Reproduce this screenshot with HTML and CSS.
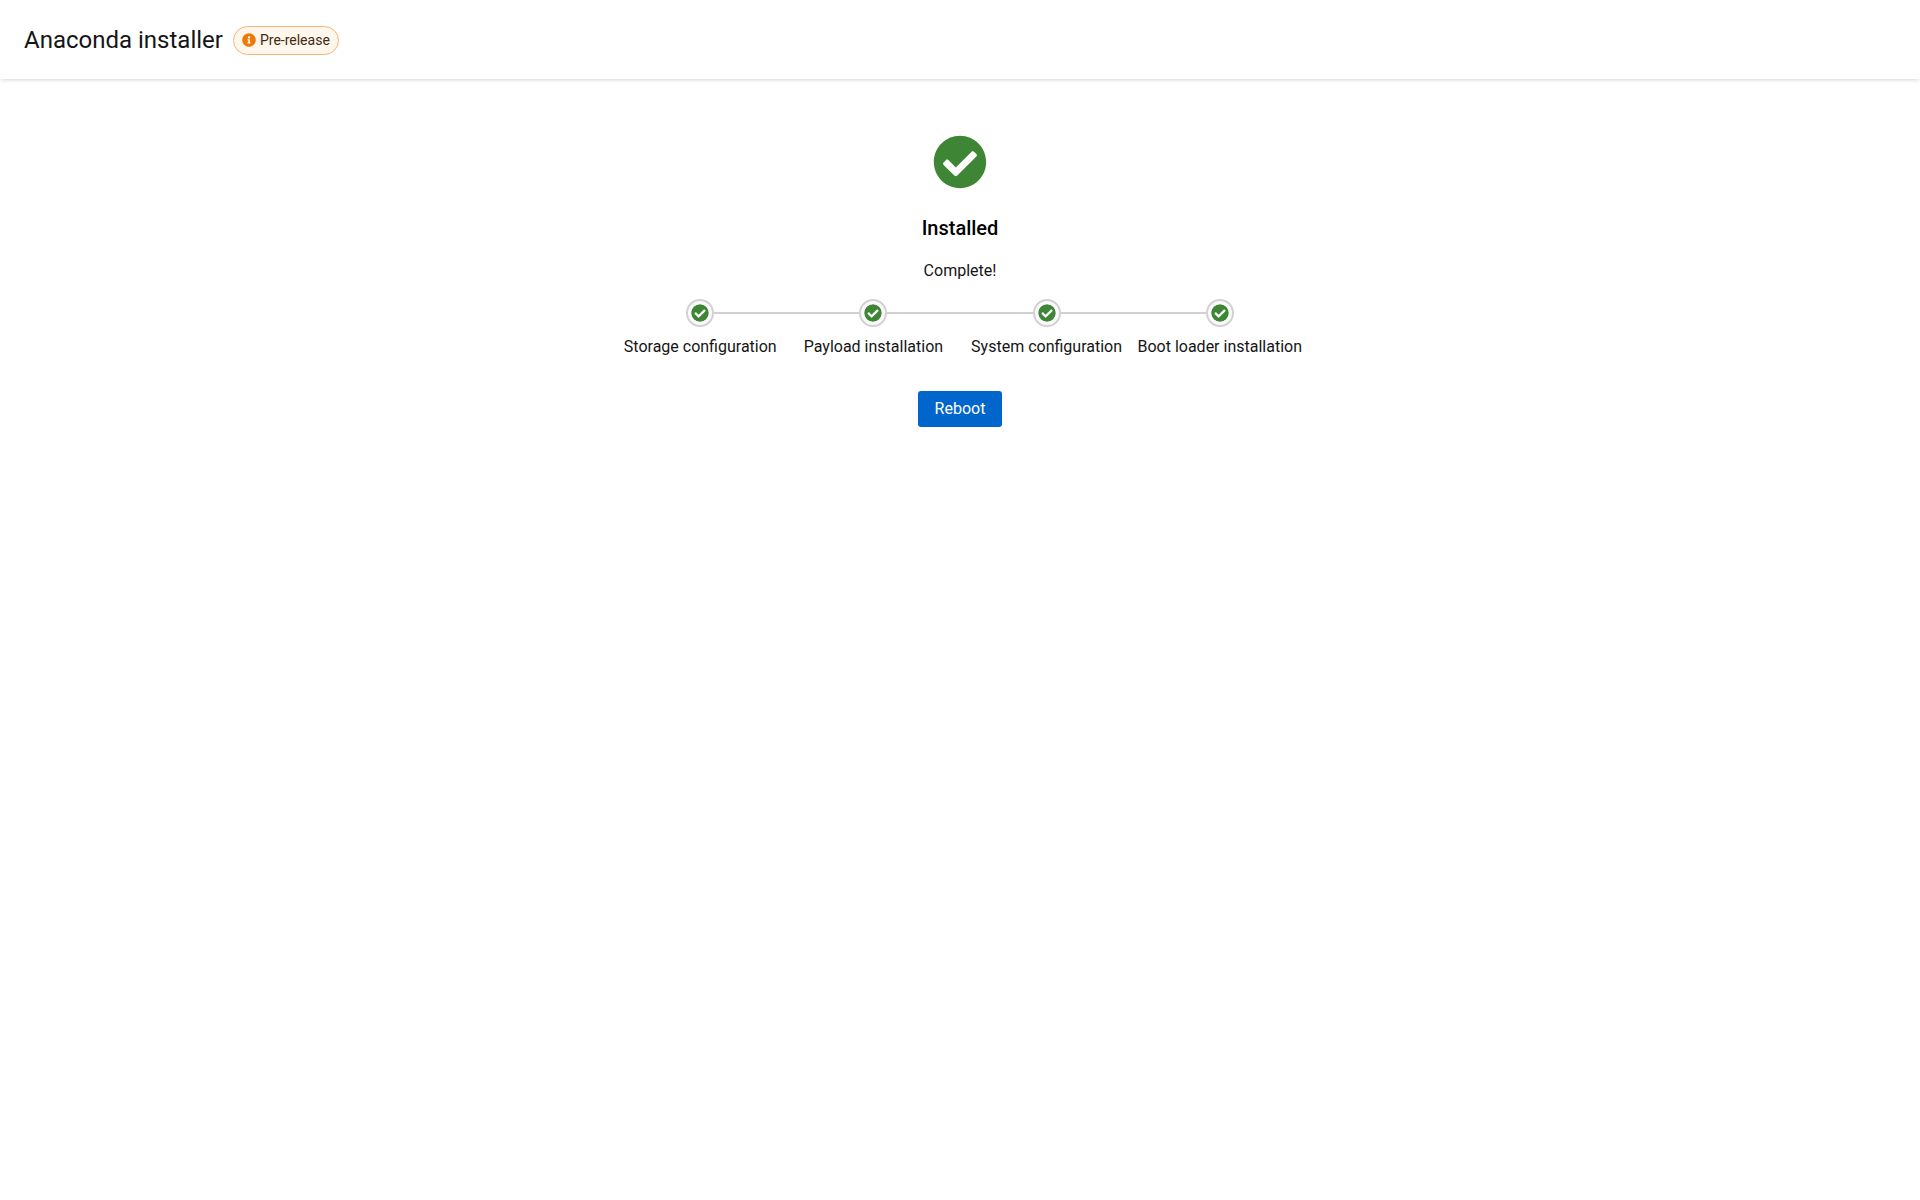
FILE: index.html
```html
<!DOCTYPE html>
<html lang="en">
<head>
  <meta charset="utf-8">
  <meta name="viewport" content="width=device-width, initial-scale=1">
  <title>Anaconda installer</title>
  <link rel="stylesheet" href="styles.css">
</head>
<body>
  <svg class="symbols" aria-hidden="true">
    <symbol id="check-circle" viewBox="0 0 512 512">
      <path d="M504 256c0 136.967-111.033 248-248 248S8 392.967 8 256 119.033 8 256 8s248 111.033 248 248zM227.314 387.314l184-184c6.248-6.248 6.248-16.379 0-22.627l-22.627-22.627c-6.248-6.249-16.379-6.249-22.628 0L216 308.118l-70.059-70.059c-6.248-6.248-16.379-6.248-22.628 0l-22.627 22.627c-6.248 6.248-6.248 16.379 0 22.627l104 104c6.249 6.249 16.379 6.249 22.628.001z"/>
    </symbol>
  </svg>

  <header class="masthead">
    <h1 class="masthead-title">Anaconda installer</h1>
    <span class="label">
      <svg class="label-icon" viewBox="0 0 512 512" aria-hidden="true">
        <path d="M256 8C119.043 8 8 119.083 8 256c0 136.997 111.043 248 248 248s248-111.003 248-248C504 119.083 392.957 8 256 8zm0 110c23.196 0 42 18.804 42 42s-18.804 42-42 42-42-18.804-42-42 18.804-42 42-42zm56 254c0 6.627-5.373 12-12 12h-88c-6.627 0-12-5.373-12-12v-24c0-6.627 5.373-12 12-12h12v-64h-12c-6.627 0-12-5.373-12-12v-24c0-6.627 5.373-12 12-12h64c6.627 0 12 5.373 12 12v100h12c6.627 0 12 5.373 12 12v24z"/>
      </svg>
      <span>Pre-release</span>
    </span>
  </header>

  <main class="result">
    <svg class="result-icon" aria-hidden="true"><use href="#check-circle"/></svg>
    <h2 class="result-title">Installed</h2>
    <p class="result-text">Complete!</p>
    <ol class="steps">
      <li class="step">
        <span class="step-marker"><svg class="step-icon" aria-hidden="true"><use href="#check-circle"/></svg></span>
        <span class="step-name">Storage configuration</span>
      </li>
      <li class="step">
        <span class="step-marker"><svg class="step-icon" aria-hidden="true"><use href="#check-circle"/></svg></span>
        <span class="step-name">Payload installation</span>
      </li>
      <li class="step">
        <span class="step-marker"><svg class="step-icon" aria-hidden="true"><use href="#check-circle"/></svg></span>
        <span class="step-name">System configuration</span>
      </li>
      <li class="step">
        <span class="step-marker"><svg class="step-icon" aria-hidden="true"><use href="#check-circle"/></svg></span>
        <span class="step-name">Boot loader installation</span>
      </li>
    </ol>
    <button class="button" type="button">Reboot</button>
  </main>
</body>
</html>
```
FILE: styles.css
```css
* {
  box-sizing: border-box;
}

body {
  margin: 0;
  background: #fff;
  color: #151515;
  font: 16px/24px Roboto, sans-serif;
}

h1, h2, p, ol {
  margin: 0;
  padding: 0;
}

.symbols {
  display: none;
}

.masthead {
  display: flex;
  align-items: center;
  gap: 10px;
  padding: 25px 24px 24px;
  box-shadow: 0 2px 4px -1px rgba(3, 3, 3, 0.16);
}

.masthead-title {
  font-size: 24px;
  font-weight: 400;
  line-height: 30px;
}

.label {
  display: flex;
  align-items: center;
  gap: 4px;
  padding: 3px 8px;
  border: 1px solid #f4b678;
  border-radius: 16px;
  background: #fff6ec;
  color: #3d2c15;
  font-size: 14px;
  line-height: 21px;
}

.label-icon {
  width: 14px;
  height: 14px;
  fill: #ec7a08;
}

.result {
  display: flex;
  flex-direction: column;
  align-items: center;
  padding: 56px 24px;
}

.result-icon {
  width: 54px;
  height: 54px;
  fill: #3e8635;
}

.result-title {
  margin-top: 24px;
  color: #000;
  font-size: 20px;
  font-weight: 500;
  line-height: 30px;
}

.result-text {
  margin-top: 16px;
}

.steps {
  display: grid;
  grid-template-columns: repeat(4, 1fr);
  width: 37%;
  min-width: 680px;
  margin: 16px 0 32px;
  list-style: none;
}

.step {
  display: flex;
  flex-direction: column;
  gap: 8px;
  text-align: center;
}

/* The marker sits between two connector lines that meet the next step's. */
.step-marker {
  display: flex;
  align-items: center;
}

.step-marker::before,
.step-marker::after {
  flex: 1;
  height: 2px;
  background: #d2d2d2;
  content: "";
}

.step:first-child .step-marker::before,
.step:last-child .step-marker::after {
  background: none;
}

.step-icon {
  width: 28px;
  height: 28px;
  padding: 3px;
  border: 2px solid #d2d2d2;
  border-radius: 50%;
  background: #fafafa;
  fill: #3e8635;
}

.button {
  padding: 6px 17px;
  border: 0;
  border-radius: 3px;
  background: #06c;
  color: #fff;
  font: inherit;
}
```
